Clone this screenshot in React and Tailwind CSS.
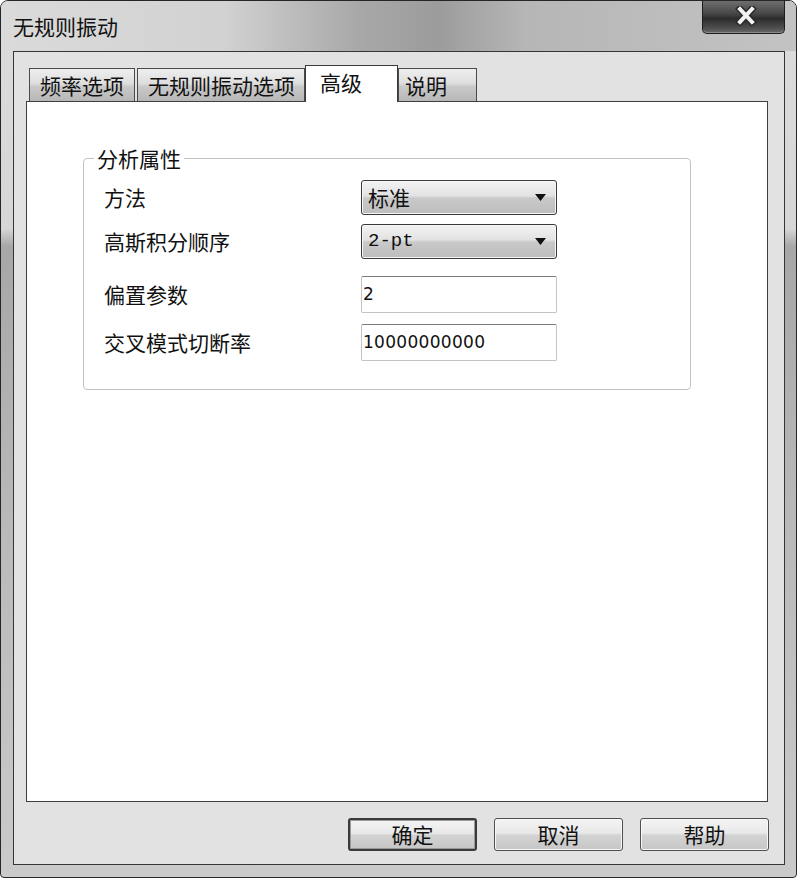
import React from 'react';

const cjk = "font-['Noto_Sans_CJK_SC','Noto_Sans',sans-serif]";

const tabs = [
  { label: '频率选项', cls: 'w-[106px] pl-[10px]' },
  { label: '无规则振动选项', cls: 'w-[168px] pl-[10px] ml-[2px]' },
  { label: '高级', cls: 'w-[93px] pl-[14px]', active: true },
  { label: '说明', cls: 'w-[79px] pl-[6px]' },
];

const Combo = ({ children, mono }) => (
  <div className="w-[196px] h-[35px] rounded-[3px] border border-[#3a3a3a] bg-[linear-gradient(180deg,#f3f3f3_0%,#e2e2e2_45%,#c9c9c9_52%,#bdbdbd_100%)] shadow-[inset_0_0_0_1px_#f6f6f6] flex items-center pl-[6px] pr-[10px]">
    <span className={mono ? "font-['Liberation_Mono',monospace] text-[19px] text-[#111]" : `${cjk} text-[21px] leading-none text-[#111]`}>
      {children}
    </span>
    <svg className="ml-auto" width="11" height="7" viewBox="0 0 11 7">
      <path d="M0 0 H11 L5.5 7 Z" fill="#111" />
    </svg>
  </div>
);

const Field = ({ value }) => (
  <div className="w-[196px] h-[37px] rounded-[2px] border border-[#c4c4c4] border-t-[#7a7a7a] bg-white flex items-center pl-[1px] font-['DejaVu_Sans',sans-serif] text-[17px] tracking-[0.3px] text-[#111]">
    {value}
  </div>
);

const Button = ({ children, primary }) => (
  <button
    className={`w-[129px] h-[33px] rounded-[3px] flex items-center justify-center ${cjk} text-[21px] leading-none text-[#111] bg-[linear-gradient(180deg,#f4f4f4_0%,#e8e8e8_46%,#d3d3d3_52%,#c6c6c6_100%)] ${
      primary
        ? 'border-2 border-[#3a3a3a] shadow-[inset_0_0_0_1px_#9a9a9a]'
        : 'border border-[#505050] shadow-[inset_0_0_0_1px_#f7f7f7]'
    }`}
  >
    {children}
  </button>
);

const rows = [
  { label: '方法', control: <Combo>标准</Combo>, mt: 'mt-[10px]' },
  { label: '高斯积分顺序', control: <Combo mono>2-pt</Combo>, mt: 'mt-[9px]' },
  { label: '偏置参数', control: <Field value="2" />, mt: 'mt-[17px]' },
  { label: '交叉模式切断率', control: <Field value="10000000000" />, mt: 'mt-[11px]' },
];

export default function App() {
  return (
    <div className="w-[797px] h-[878px] flex flex-col overflow-hidden rounded-t-[8px] rounded-b-[4px] border border-[#262626] bg-[linear-gradient(180deg,#dcdcdc_0%,#d6d6d6_26%,#a7a7a7_28%,#b9b9b9_60%,#cacaca_100%)]">
      {/* title bar */}
      <div className="h-[50px] flex items-start shrink-0 bg-[linear-gradient(90deg,#dadada_0%,#d2d2d2_28%,#a8a8a8_45%,#9c9c9c_55%,#b6b6b6_66%,#c3c3c3_100%)]">
        <span className={`${cjk} self-center pl-[12px] text-[21px] leading-none text-[#111]`}>无规则振动</span>
        <div className="ml-auto mr-[11px] w-[83px] h-[33px] rounded-b-[5px] border border-t-0 border-[#1e1e1e] bg-[linear-gradient(180deg,#6e6e6e_0%,#474747_40%,#2c2c2c_55%,#4f4f4f_85%,#6a6a6a_100%)] shadow-[inset_0_-1px_0_#8a8a8a] flex items-center justify-center pl-[4px] pb-[2px]">
          <svg width="22" height="20" viewBox="0 0 22 20">
            <path d="M5 3 L17 16 M17 3 L5 16" stroke="#2a2a2a" strokeWidth="7" strokeLinecap="square" />
            <path d="M5 3 L17 16 M17 3 L5 16" stroke="#f2f2f2" strokeWidth="4" strokeLinecap="square" />
          </svg>
        </div>
      </div>

      {/* window body frame */}
      <div className="flex-1 flex pl-[12px] pr-[11px] pb-[12px]">
        <div className="flex-1 flex flex-col border border-[#353535] bg-[#e2e2e2] pt-[13px] pb-[13px]">
          {/* tab strip */}
          <div className="flex items-end h-[36px] ml-[15px]">
            {tabs.map((t) =>
              t.active ? (
                <div
                  key={t.label}
                  className={`${t.cls} relative z-10 -mb-px h-[37px] border border-b-0 border-[#3a3a3a] bg-white flex items-center ${cjk} text-[21px] leading-none text-[#111] pb-[4px]`}
                >
                  {t.label}
                </div>
              ) : (
                <div
                  key={t.label}
                  className={`${t.cls} h-[33px] border border-b-0 border-[#4a4a4a] bg-[linear-gradient(180deg,#eeeeee_0%,#dedede_45%,#c9c9c9_55%,#b7b7b7_100%)] flex items-center ${cjk} text-[21px] leading-none text-[#111]`}
                >
                  {t.label}
                </div>
              )
            )}
          </div>

          {/* tab panel */}
          <div className="flex-1 ml-[12px] mr-[16px] border border-[#3e3e3e] bg-white">
            <fieldset className="ml-[56px] mt-[44px] w-[608px] rounded-[4px] border border-[#c2c2c2] p-0 pb-[28px]">
              <legend className={`ml-[10px] px-[3px] ${cjk} text-[21px] leading-[24px] text-[#111]`}>分析属性</legend>
              {rows.map((r) => (
                <div key={r.label} className={`flex items-center ${r.mt}`}>
                  <span className={`w-[277px] pl-[20px] ${cjk} text-[21px] leading-none text-[#111]`}>{r.label}</span>
                  {r.control}
                </div>
              ))}
            </fieldset>
          </div>

          {/* buttons */}
          <div className="mt-[16px] flex justify-end gap-[17px] pr-[15px]">
            <Button primary>确定</Button>
            <Button>取消</Button>
            <Button>帮助</Button>
          </div>
        </div>
      </div>
    </div>
  );
}
